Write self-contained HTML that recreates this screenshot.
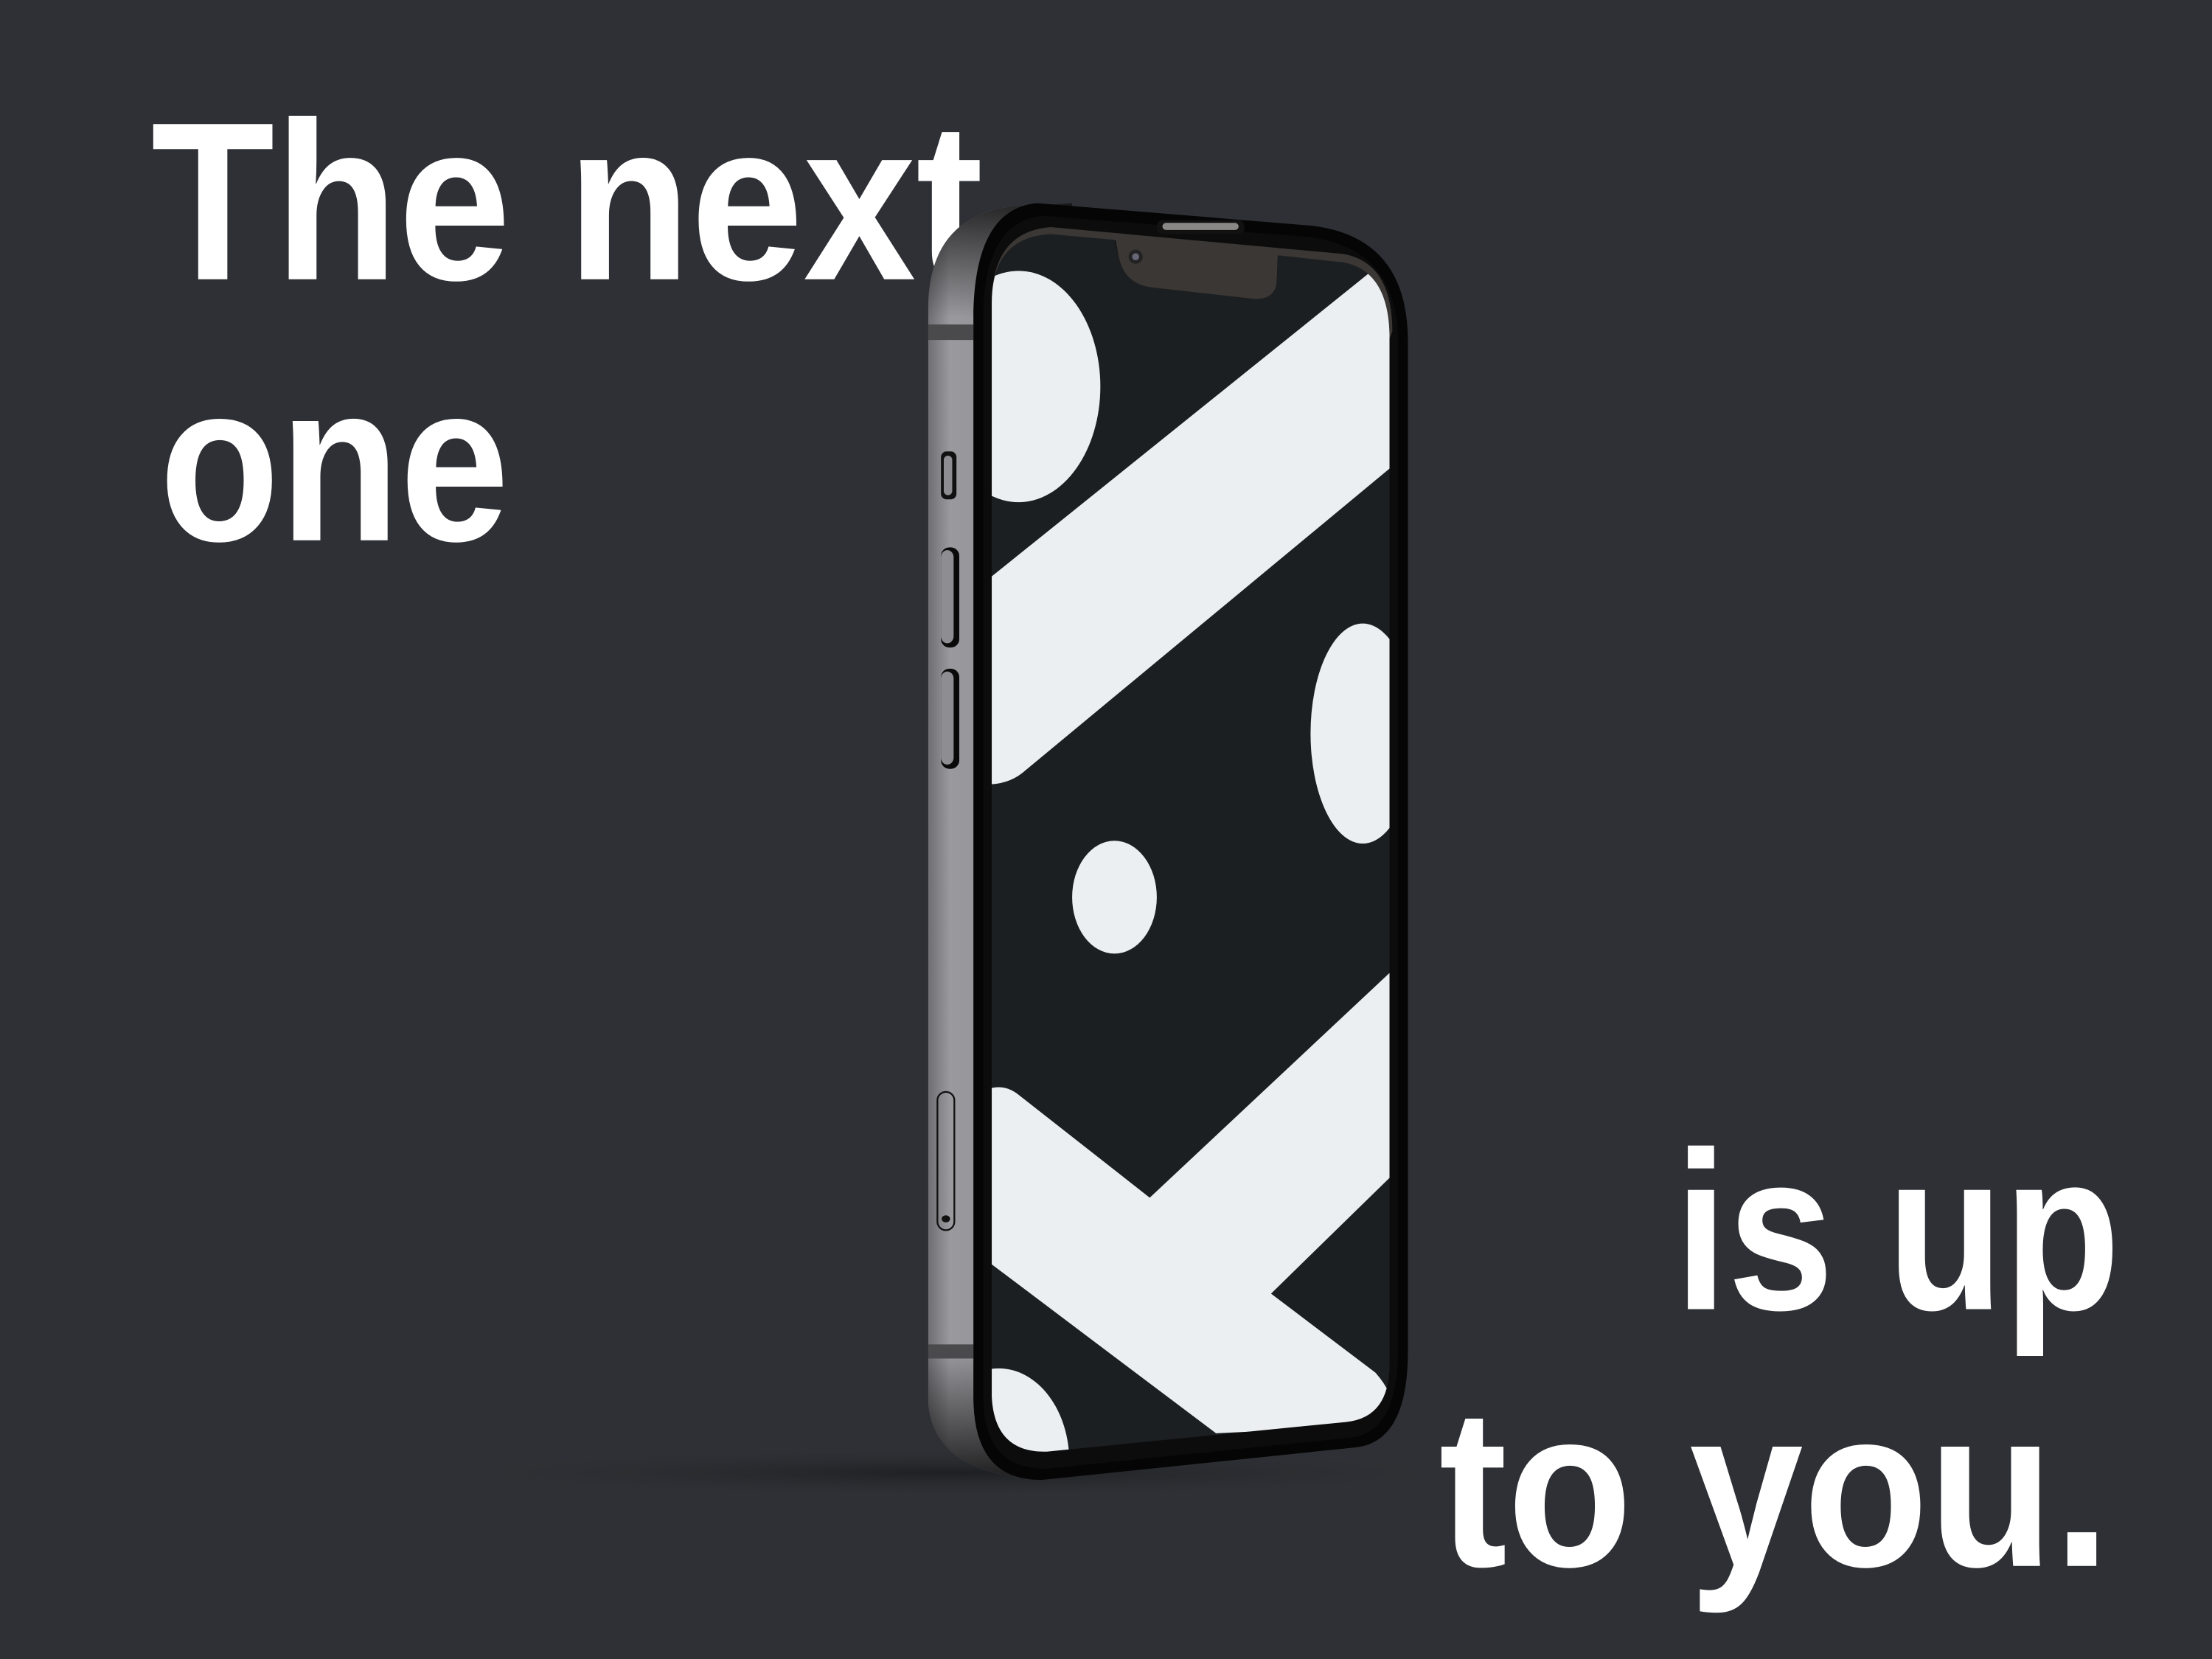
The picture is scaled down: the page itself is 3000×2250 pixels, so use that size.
<!DOCTYPE html>
<html><head><meta charset="utf-8"><style>
html,body{margin:0;padding:0;background:#2e3035;}
svg{display:block;}
text{font-family:"Liberation Sans",sans-serif;fill:#fff;font-weight:bold;}
</style></head><body>
<svg width="3000" height="2250" viewBox="0 0 1568 1176" preserveAspectRatio="none" xmlns="http://www.w3.org/2000/svg">
<defs>
<radialGradient id="sh" cx="0.5" cy="0.5" r="0.5">
<stop offset="0" stop-color="#1b1c1f" stop-opacity="0.85"/><stop offset="1" stop-color="#2e3035" stop-opacity="0"/>
</radialGradient>
<linearGradient id="metal" x1="0" y1="0" x2="1" y2="0">
<stop offset="0" stop-color="#6f6f73"/><stop offset="0.15" stop-color="#9a999d"/><stop offset="0.8" stop-color="#8e8d91"/><stop offset="1" stop-color="#5a595c"/>
</linearGradient>
<linearGradient id="metalv" x1="0" y1="0" x2="0" y2="1">
<stop offset="0" stop-color="#000" stop-opacity="0.75"/><stop offset="0.09" stop-color="#000" stop-opacity="0"/><stop offset="0.9" stop-color="#000" stop-opacity="0"/><stop offset="1" stop-color="#000" stop-opacity="0.8"/>
</linearGradient>
<clipPath id="scr"><path d="M703,215 Q703,168 745,166 L790,170 L793,182 Q797,202 818,204 L890,212 Q904,212 905,200 L906,181 L952,186 Q985,192 985,240 L985,967 Q985,1005 954,1008 L742,1029 Q705,1030 703,990 Z"/></clipPath>
</defs>
<rect width="1568" height="1176" fill="#2e3035"/>
<ellipse cx="680" cy="1044" rx="380" ry="18" fill="url(#sh)"/>

<text x="107" y="198" font-size="160" textLength="590" lengthAdjust="spacingAndGlyphs">The next</text>
<text x="113" y="383" font-size="160" textLength="248" lengthAdjust="spacingAndGlyphs">one</text>
<text x="1187" y="928" font-size="160" textLength="316" lengthAdjust="spacingAndGlyphs">is up</text>
<text x="1020" y="1110" font-size="160" textLength="476" lengthAdjust="spacingAndGlyphs">to you.</text>

<!-- metal side -->
<path d="M658,215 Q660,152 720,146 L760,144 L740,1049 Q662,1045 658,995 Z" fill="url(#metal)"/>
<path d="M658,215 Q660,152 720,146 L760,144 L740,1049 Q662,1045 658,995 Z" fill="url(#metalv)"/>
<rect x="658" y="230" width="32" height="11" fill="#4a4a4c"/>
<rect x="658" y="953" width="32" height="10" fill="#4a4a4c"/>
<!-- front rim -->
<path d="M690,220 Q692,148 735,144 L930,160 Q997,168 998,240 L998,958 Q998,1022 961,1026 L739,1049 Q690,1050 690,990 Z" fill="#050505"/>
<path d="M697,220 Q699,156 740,153 L928,168 Q990,176 991,240 L991,960 Q990,1015 958,1019 L742,1041 Q697,1042 697,990 Z" fill="#0c0c0c"/>
<path d="M790,166 L793,182 Q797,202 818,204 L890,212 Q904,212 905,200 L906,176 Z" fill="#3a3734"/>
<path d="M703,215 Q703,164 745,161 L952,180 Q987,186 987,235 L985,240 Q985,192 952,186 L745,166 Q703,168 703,215 Z" fill="#3a3734"/>
<!-- screen -->
<g clip-path="url(#scr)">
<rect x="690" y="160" width="300" height="880" fill="#1c1f22"/>
<ellipse cx="722" cy="274" rx="58" ry="82" fill="#ebeff1"/>
<path d="M970,194 L990,194 L990,328 L727,546 Q716,556 700,556 L700,411 Z" fill="#ebeff1"/>
<ellipse cx="966" cy="520" rx="37" ry="78" fill="#ebeff1"/>
<ellipse cx="790" cy="636" rx="30" ry="40" fill="#ebeff1"/>
<path d="M700,772 Q712,768 722,776 L815,849 L990,685 L990,830 L901,917 L975,973 Q990,990 990,1010 L862,1016 L700,894 Z" fill="#ebeff1"/>
<ellipse cx="708" cy="1036" rx="50" ry="66" fill="#ebeff1"/>
</g>
<!-- speaker & camera -->
<rect x="820" y="156" width="62" height="10" rx="4" fill="#111"/>
<rect x="824" y="158" width="54" height="5" rx="2.5" fill="#8a8886"/>
<circle cx="805" cy="182" r="5" fill="#222"/><circle cx="805" cy="182" r="2.5" fill="#667"/>
<!-- side buttons -->
<rect x="667" y="320" width="11" height="34" rx="4" fill="#111"/><rect x="669" y="323" width="6" height="28" rx="3" fill="#8e8d91"/>
<rect x="667" y="388" width="13" height="71" rx="6" fill="#0a0a0a"/><rect x="667" y="390" width="9" height="66" rx="5" fill="#8e8d91"/>
<rect x="667" y="474" width="13" height="71" rx="6" fill="#0a0a0a"/><rect x="667" y="476" width="9" height="66" rx="5" fill="#8e8d91"/>
<rect x="664.5" y="774" width="12" height="98" rx="6" fill="none" stroke="#111" stroke-width="1.2"/>
<ellipse cx="670.5" cy="864" rx="3" ry="2.5" fill="#111"/>
</svg>
</body></html>
